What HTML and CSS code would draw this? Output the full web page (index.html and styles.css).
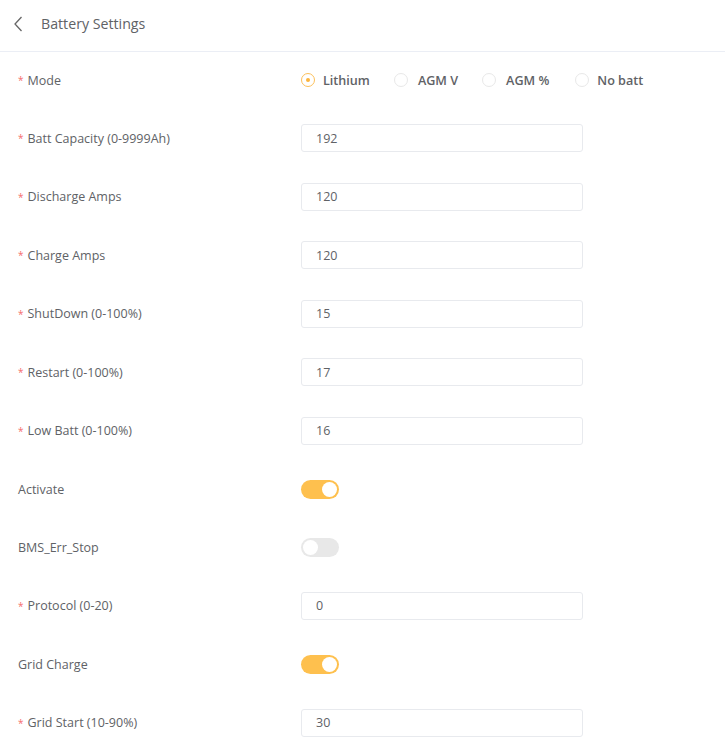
FILE: index.html
```html
<!DOCTYPE html>
<html lang="en">
<head>
    <meta charset="UTF-8">
    <meta name="viewport" content="width=device-width, initial-scale=1.0">
    <title>Battery Settings</title>
    <link rel="stylesheet" href="styles.css">
</head>
<body>
    <header class="top-bar">
        <a href="#" class="back-btn">
            <svg width="9" height="16" viewBox="0 0 9 16"><path d="M7.5 1 L1 8 L7.5 15" fill="none" stroke="#666" stroke-width="1.3"/></svg>
        </a>
        <h1>Battery Settings</h1>
    </header>

    <form class="settings-form">
        <div class="form-row">
            <label class="required">Mode</label>
            <div class="radio-group">
                <label class="radio checked"><span class="radio-dot"></span>Lithium</label>
                <label class="radio"><span class="radio-dot"></span>AGM V</label>
                <label class="radio"><span class="radio-dot"></span>AGM %</label>
                <label class="radio"><span class="radio-dot"></span>No batt</label>
            </div>
        </div>
        <div class="form-row">
            <label class="required">Batt Capacity (0-9999Ah)</label>
            <input type="text" value="192">
        </div>
        <div class="form-row">
            <label class="required">Discharge Amps</label>
            <input type="text" value="120">
        </div>
        <div class="form-row">
            <label class="required">Charge Amps</label>
            <input type="text" value="120">
        </div>
        <div class="form-row">
            <label class="required">ShutDown (0-100%)</label>
            <input type="text" value="15">
        </div>
        <div class="form-row">
            <label class="required">Restart (0-100%)</label>
            <input type="text" value="17">
        </div>
        <div class="form-row">
            <label class="required">Low Batt (0-100%)</label>
            <input type="text" value="16">
        </div>
        <div class="form-row">
            <label>Activate</label>
            <span class="switch on"></span>
        </div>
        <div class="form-row">
            <label>BMS_Err_Stop</label>
            <span class="switch"></span>
        </div>
        <div class="form-row">
            <label class="required">Protocol (0-20)</label>
            <input type="text" value="0">
        </div>
        <div class="form-row">
            <label>Grid Charge</label>
            <span class="switch on"></span>
        </div>
        <div class="form-row">
            <label class="required">Grid Start (10-90%)</label>
            <input type="text" value="30">
        </div>
    </form>
</body>
</html>
```

FILE: styles.css
```css
* {
    margin: 0;
    padding: 0;
    box-sizing: border-box;
    font-family: "Open Sans", "Noto Sans", sans-serif;
}

body {
    background-color: #ffffff;
    color: #606266;
}

.top-bar {
    display: flex;
    align-items: center;
    height: 52px;
    padding-left: 14px;
    padding-bottom: 4px;
    border-bottom: 1px solid #ebeef5;
}

.back-btn {
    display: flex;
    width: 27px;
}

.top-bar h1 {
    font-size: 14.2px;
    font-weight: 400;
    color: #606266;
}

.settings-form {
    padding: 14px 0 0 18px;
}

.form-row {
    display: flex;
    align-items: center;
    height: 28px;
    margin-bottom: 30.45px;
}

.form-row > label {
    display: flex;
    align-items: center;
    width: 283px;
    font-size: 12.5px;
    color: #606266;
}

.form-row > label.required::before {
    content: "*";
    font-size: 10px;
    color: #f56c6c;
    margin-right: 4px;
}

.form-row input {
    width: 282px;
    height: 28px;
    padding: 0 14px;
    border: 1px solid #e8eaee;
    border-radius: 3px;
    font-size: 12.5px;
    color: #606266;
    outline: none;
}

.radio-group {
    display: flex;
    align-items: center;
}

.radio {
    display: flex;
    align-items: center;
    margin-right: 24px;
    font-size: 12.6px;
    font-weight: 600;
    color: #606266;
}

.radio-dot {
    width: 14px;
    height: 14px;
    margin-right: 8px;
    border: 1px solid #e8e8e8;
    border-radius: 50%;
    display: flex;
    align-items: center;
    justify-content: center;
}

.radio.checked .radio-dot {
    border-color: #fcc05a;
}

.radio.checked .radio-dot::after {
    content: "";
    width: 4px;
    height: 4px;
    border-radius: 50%;
    background-color: #fcb43c;
}

.radio:nth-child(2) .radio-dot,
.radio:nth-child(3) .radio-dot {
    margin-right: 10px;
}

.radio:nth-child(3) {
    margin-right: 26px;
}

.switch {
    position: relative;
    width: 38px;
    height: 19px;
    border-radius: 10px;
    background-color: #e8e8e8;
}

.switch::after {
    content: "";
    position: absolute;
    top: 2px;
    left: 2px;
    width: 15px;
    height: 15px;
    border-radius: 50%;
    background-color: #ffffff;
}

.switch.on {
    background-color: #fec04e;
}

.switch.on::after {
    left: 21px;
}
```
